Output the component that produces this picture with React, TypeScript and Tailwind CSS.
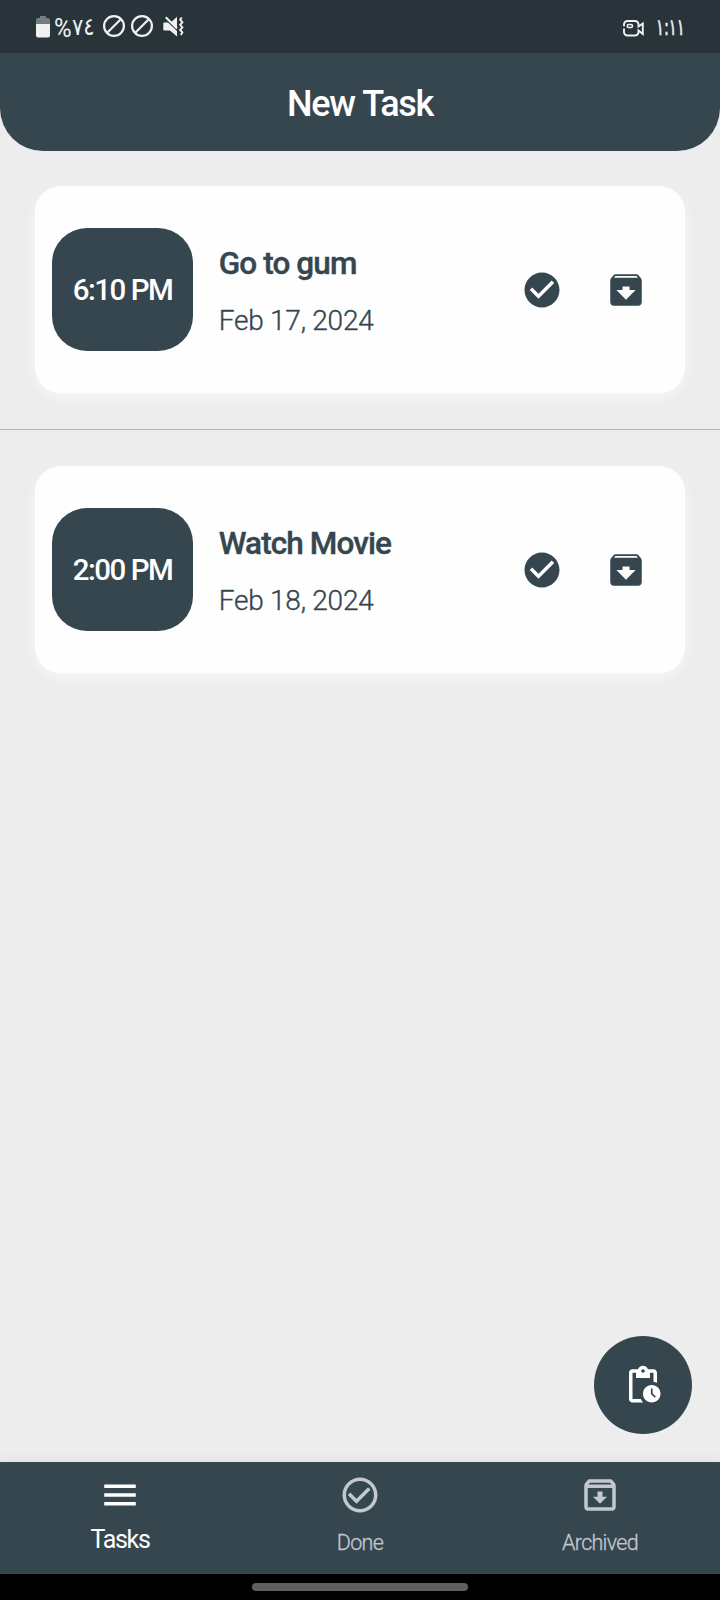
import type { ReactNode } from "react";
import {
  MdArchive,
  MdCheckCircle,
  MdCheckCircleOutline,
  MdMenu,
  MdOutlineArchive,
  MdPendingActions,
} from "react-icons/md";

function BatteryIcon() {
  return (
    <svg width="14" height="22" viewBox="0 0 14 22">
      <path d="M4 0h6v2h2a2 2 0 0 1 2 2v4H0V4a2 2 0 0 1 2-2h2z" fill="#757d82" />
      <path d="M0 8h14v11.500a2 2 0 0 1-2 2H2a2 2 0 0 1-2-2z" fill="#f1f1f1" />
    </svg>
  );
}

function BlockedIcon() {
  return (
    <svg width="22" height="22" viewBox="0 0 22 22" fill="none" stroke="#f1f1f1" strokeWidth="2.200">
      <circle cx="11" cy="11" r="9.900" />
      <path d="M4.200 17.800 17.800 4.200" />
    </svg>
  );
}

function MutedVibrateIcon() {
  return (
    <svg width="21" height="21" viewBox="0 0 21 21" fill="none">
      <path d="M1.500 6.500h3.500l9 8.500v5.500L7 14.500H1.500Q.3 14.500.3 13.500v-6q0-1 1.200-1z" fill="#f1f1f1" />
      <path d="M14 .8v11L8.300 6z" fill="#f1f1f1" />
      <path d="M2.800 1.200 14 12.500" stroke="#f1f1f1" strokeWidth="2" />
      <path d="M18.800 1.500l-1.600 2.200 2.200 2.500-2.200 2.600 2.200 2.600-2.200 2.500 2.200 2.500-1.600 2.600" stroke="#f1f1f1" strokeWidth="1.900" />
    </svg>
  );
}

function CameraIcon() {
  return (
    <svg width="22" height="17" viewBox="0 0 22 17" fill="none" stroke="#f1f1f1" strokeWidth="1.900">
      <path d="M1 6.200V4.500A3.500 3.500 0 0 1 4.500 1h7.500A3.500 3.500 0 0 1 15.500 4.500V6.500l4.300-3v10.500l-4.300-3.500v1.500A3.500 3.500 0 0 1 12 15.500H4.500A3.500 3.500 0 0 1 1 12V8.500" />
      <rect x="4.200" y="4.500" width="5.300" height="3" rx="1.500" strokeWidth="1.500" />
    </svg>
  );
}

function StatusBar() {
  return (
    <div className="flex h-[53px] shrink-0 items-start justify-between bg-[#28343a] pr-[34px] pl-9 text-[#f1f1f1]">
      <div className="flex items-start">
        <span className="mt-4"><BatteryIcon /></span>
        <span className="mt-[17px] ml-1 w-[18px] text-[25px] leading-6">
          <span className="inline-block origin-left scale-x-[0.96]">%</span>
        </span>
        <span className="mt-[15px] w-6 font-['DejaVu_Sans',sans-serif] text-[24px] leading-6">
          <span className="inline-block origin-left scale-x-[0.88]">٧٤</span>
        </span>
        <span className="mt-[15px] ml-[7px]"><BlockedIcon /></span>
        <span className="mt-[15px] ml-1.5"><BlockedIcon /></span>
        <span className="mt-4 ml-[10px]"><MutedVibrateIcon /></span>
      </div>
      <div className="flex items-start">
        <span className="mt-5"><CameraIcon /></span>
        <span className="mt-[15px] ml-[11px] w-[30px] whitespace-nowrap font-['DejaVu_Sans',sans-serif] text-[23px] leading-6">
          <span className="inline-block origin-left scale-x-[0.64] [-webkit-text-stroke:0.6px_#f1f1f1]">١:١١</span>
        </span>
      </div>
    </div>
  );
}

type Task = { time: string; title: string; date: string };

const tasks: Task[] = [
  { time: "6:10 PM", title: "Go to gum", date: "Feb 17, 2024" },
  { time: "2:00 PM", title: "Watch Movie", date: "Feb 18, 2024" },
];

function TaskCard({ task }: { task: Task }) {
  return (
    <article className="flex h-[207px] items-center rounded-[26px] bg-[#fefefe] pl-[17.400px] text-[#36464f] shadow-[0_4px_12px_rgba(255,255,255,0.6)]">
      <div className="flex h-[122.600px] w-[140.400px] items-center justify-center whitespace-nowrap rounded-[35px] bg-[#36464f] pt-px text-[29.500px] leading-8 font-medium tracking-[-1.500px] text-white">
        {task.time}
      </div>
      <div className="mt-[5px] ml-[26px] flex w-[266px] flex-col gap-[25px]">
        <h2 className="text-[31.500px] leading-8 font-medium tracking-[-0.9px] whitespace-nowrap [-webkit-text-stroke:0.4px_#36464f]">{task.title}</h2>
        <p className="text-[28px] leading-8 font-light tracking-[-0.25px] whitespace-nowrap [-webkit-text-stroke:0.35px_#36464f]">{task.date}</p>
      </div>
      <button className="ml-[36px]"><MdCheckCircle size={42} /></button>
      <button className="ml-[42px]"><MdArchive size={42} /></button>
    </article>
  );
}

function NavItem({ icon, label, active }: { icon: ReactNode; label: string; active?: boolean }) {
  return (
    <button className={`flex flex-1 flex-col items-center pt-3 ${active ? "text-white" : "text-[#c3c7cf]"}`}>
      {icon}
      <span className={active ? "mt-2 text-[25px] leading-8 tracking-[-1.3px]" : "mt-[13px] text-[21.5px] leading-7 font-light tracking-[-0.7px] [-webkit-text-stroke:0.3px_#c3c7cf]"}>{label}</span>
    </button>
  );
}

export default function App() {
  return (
    <div className="flex h-[1600px] w-[720px] flex-col overflow-hidden bg-[#ededed] font-[Roboto,'Noto_Sans',sans-serif]">
      <StatusBar />
      <header className="flex h-[98px] shrink-0 items-center justify-center rounded-b-[43px] bg-[#36464f] pt-1">
        <h1 className="text-[36px] leading-10 font-medium tracking-[-1.400px] [word-spacing:1px] text-white">New Task</h1>
      </header>
      <main className="flex flex-1 flex-col">
        <div className="px-[35px] py-[35px]"><TaskCard task={tasks[0]} /></div>
        <div className="mt-px h-px bg-[#b5b5b5]" />
        <div className="px-[35px] pt-9"><TaskCard task={tasks[1]} /></div>
        <button className="mt-auto mr-7 mb-7 flex size-[98px] items-center justify-center self-end rounded-full bg-[#36464f] text-white">
          <MdPendingActions size={42} />
        </button>
      </main>
      <nav className="flex h-[112px] shrink-0 bg-[#36464f] shadow-[0_-2px_12px_rgba(0,0,0,0.06)]">
        <NavItem icon={<MdMenu size={42} />} label="Tasks" active />
        <NavItem icon={<MdCheckCircleOutline size={42} />} label="Done" />
        <NavItem icon={<MdOutlineArchive size={42} />} label="Archived" />
      </nav>
      <div className="flex h-[26px] shrink-0 justify-center bg-black pt-[9px]">
        <div className="h-2 w-[216px] rounded-full bg-[#5e5e5e]" />
      </div>
    </div>
  );
}
